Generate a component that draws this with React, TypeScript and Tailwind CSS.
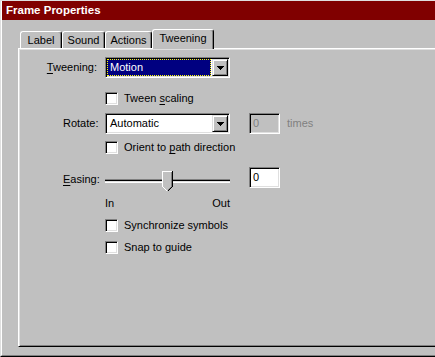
import React from "react";

const sunken =
  "border border-t-[#808080] border-l-[#808080] border-b-white border-r-white shadow-[inset_1px_1px_0_#000,inset_-1px_-1px_0_#dfdfdf]";
const raised =
  "border border-t-[#dfdfdf] border-l-[#dfdfdf] border-b-black border-r-black shadow-[inset_1px_1px_0_#fff,inset_-1px_-1px_0_#808080] bg-[#c0c0c0]";

function Arrow() {
  return (
    <svg width="7" height="4" viewBox="0 0 7 4" shapeRendering="crispEdges">
      <rect x="0" y="0" width="7" height="1" fill="#000" />
      <rect x="1" y="1" width="5" height="1" fill="#000" />
      <rect x="2" y="2" width="3" height="1" fill="#000" />
      <rect x="3" y="3" width="1" height="1" fill="#000" />
    </svg>
  );
}

function Select({ value, focused }: { value: string; focused?: boolean }) {
  return (
    <div className={`flex h-[21px] w-[125px] bg-white p-px ${sunken}`}>
      <div className="flex flex-1 pr-px">
        {focused ? (
          <div className="flex flex-1 items-center border border-dotted border-[#ffff00] bg-[#000080] pl-[2px] text-white">
            {value}
          </div>
        ) : (
          <div className="flex flex-1 items-center pl-[3px]">{value}</div>
        )}
      </div>
      <div className={`flex w-[16px] items-center justify-center ${raised}`}>
        <Arrow />
      </div>
    </div>
  );
}

function Checkbox({ children }: { children: React.ReactNode }) {
  return (
    <div className="flex h-[13px] items-center">
      <div className={`h-[13px] w-[13px] bg-white ${sunken}`} />
      <span className="ml-[6px] leading-[13px]">{children}</span>
    </div>
  );
}

function Thumb() {
  return (
    <svg width="11" height="21" viewBox="0 0 11 21" shapeRendering="crispEdges">
      <polygon points="0,0 11,0 11,16 6,21 5,21 0,16" fill="#c0c0c0" />
      <rect x="0" y="0" width="10" height="1" fill="#fff" />
      <rect x="0" y="0" width="1" height="16" fill="#fff" />
      <rect x="10" y="0" width="1" height="16" fill="#000" />
      <rect x="9" y="1" width="1" height="15" fill="#808080" />
      <path d="M0.5 15.5 L5.5 20.5" stroke="#fff" strokeWidth="1" fill="none" />
      <path d="M10.5 15.5 L5.5 20.5" stroke="#000" strokeWidth="1" fill="none" />
      <path d="M9.5 15.5 L5.5 19.5" stroke="#808080" strokeWidth="1" fill="none" />
    </svg>
  );
}

const tabs = [
  { label: "Label", w: "w-[42px]" },
  { label: "Sound", w: "w-[43px]" },
  { label: "Actions", w: "w-[47px]" },
];

export default function App() {
  return (
    <div className="flex h-[357px] w-[435px] flex-col overflow-hidden border-t border-l border-b border-t-[#dfdfdf] border-l-[#dfdfdf] border-b-black bg-[#c0c0c0] font-['Liberation_Sans',Arial,sans-serif] text-[11px] text-black">
      <div className="flex flex-1 flex-col border-l border-b border-l-white border-b-[#808080]">
        <div className="flex h-[19px] items-center bg-[#800000] pl-[4px] text-[11.5px] font-bold text-white">
          Frame Properties
        </div>

        <div className="flex flex-1 flex-col pl-[16px] pt-[9px] pb-[8px]">
          <div className="relative z-10 flex h-[19px] items-end pl-[2px]">
            {tabs.map((t) => (
              <div
                key={t.label}
                className={`flex h-[17px] items-center justify-center rounded-t-[3px] border-t border-l border-r border-t-white border-l-white border-r-black shadow-[inset_-1px_0_0_#808080] ${t.w}`}
              >
                {t.label}
              </div>
            ))}
            <div className="-mb-px flex h-[20px] w-[62px] items-center justify-center rounded-t-[3px] border-t border-l border-r border-t-white border-l-white border-r-black bg-[#c0c0c0] pb-[2px] shadow-[inset_-1px_0_0_#808080]">
              Tweening
            </div>
          </div>

          <div className="-mr-[20px] flex flex-1 flex-col border-t border-l border-b border-t-white border-l-white border-b-black pt-[8px] shadow-[inset_1px_1px_0_#dfdfdf,inset_0_-1px_0_#808080]">
            <div className="flex h-[21px] items-center">
              <div className="flex w-[86px] justify-end pr-[8px]">
                <span>
                  <u className="underline-offset-2">T</u>weening:
                </span>
              </div>
              <Select value="Motion" focused />
            </div>

            <div className="mt-[14px] flex">
              <div className="w-[86px]" />
              <Checkbox>
                Tween <u className="underline-offset-2">s</u>caling
              </Checkbox>
            </div>

            <div className="mt-[8px] flex h-[21px] items-center">
              <div className="w-[86px] pl-[44px]">Rotate:</div>
              <Select value="Automatic" />
              <div className={`ml-[19px] flex h-[21px] w-[31px] items-center bg-[#c0c0c0] pl-[3px] text-[#808080] ${sunken}`}>
                0
              </div>
              <span className="ml-[7px] text-[#808080]">times</span>
            </div>

            <div className="mt-[7px] flex">
              <div className="w-[86px]" />
              <Checkbox>
                Orient to <u className="underline-offset-2">p</u>ath direction
              </Checkbox>
            </div>

            <div className="mt-[13px] flex h-[25px] items-start">
              <div className="mt-[6px] w-[86px] pl-[44px] leading-[13px]">
                <u className="underline-offset-2">E</u>asing:
              </div>
              <div className="relative h-[25px] w-[125px]">
                <div className="mt-[12px] h-[4px] border-t border-b border-t-[#808080] border-b-white bg-[#dfdfdf] shadow-[inset_0_1px_0_#000]" />
                <div className="absolute left-[57px] top-[4px] flex">
                  <Thumb />
                </div>
              </div>
              <div className={`ml-[19px] flex h-[21px] w-[31px] items-center bg-white pl-[3px] ${sunken}`}>
                0
              </div>
            </div>

            <div className="mt-[5px] flex h-[13px] items-center leading-[13px]">
              <div className="w-[86px]" />
              <div className="flex w-[125px] justify-between">
                <span>In</span>
                <span>Out</span>
              </div>
            </div>

            <div className="mt-[9px] flex">
              <div className="w-[86px]" />
              <Checkbox>Synchronize symbols</Checkbox>
            </div>

            <div className="mt-[9px] flex">
              <div className="w-[86px]" />
              <Checkbox>Snap to guide</Checkbox>
            </div>
          </div>
        </div>
      </div>
    </div>
  );
}
